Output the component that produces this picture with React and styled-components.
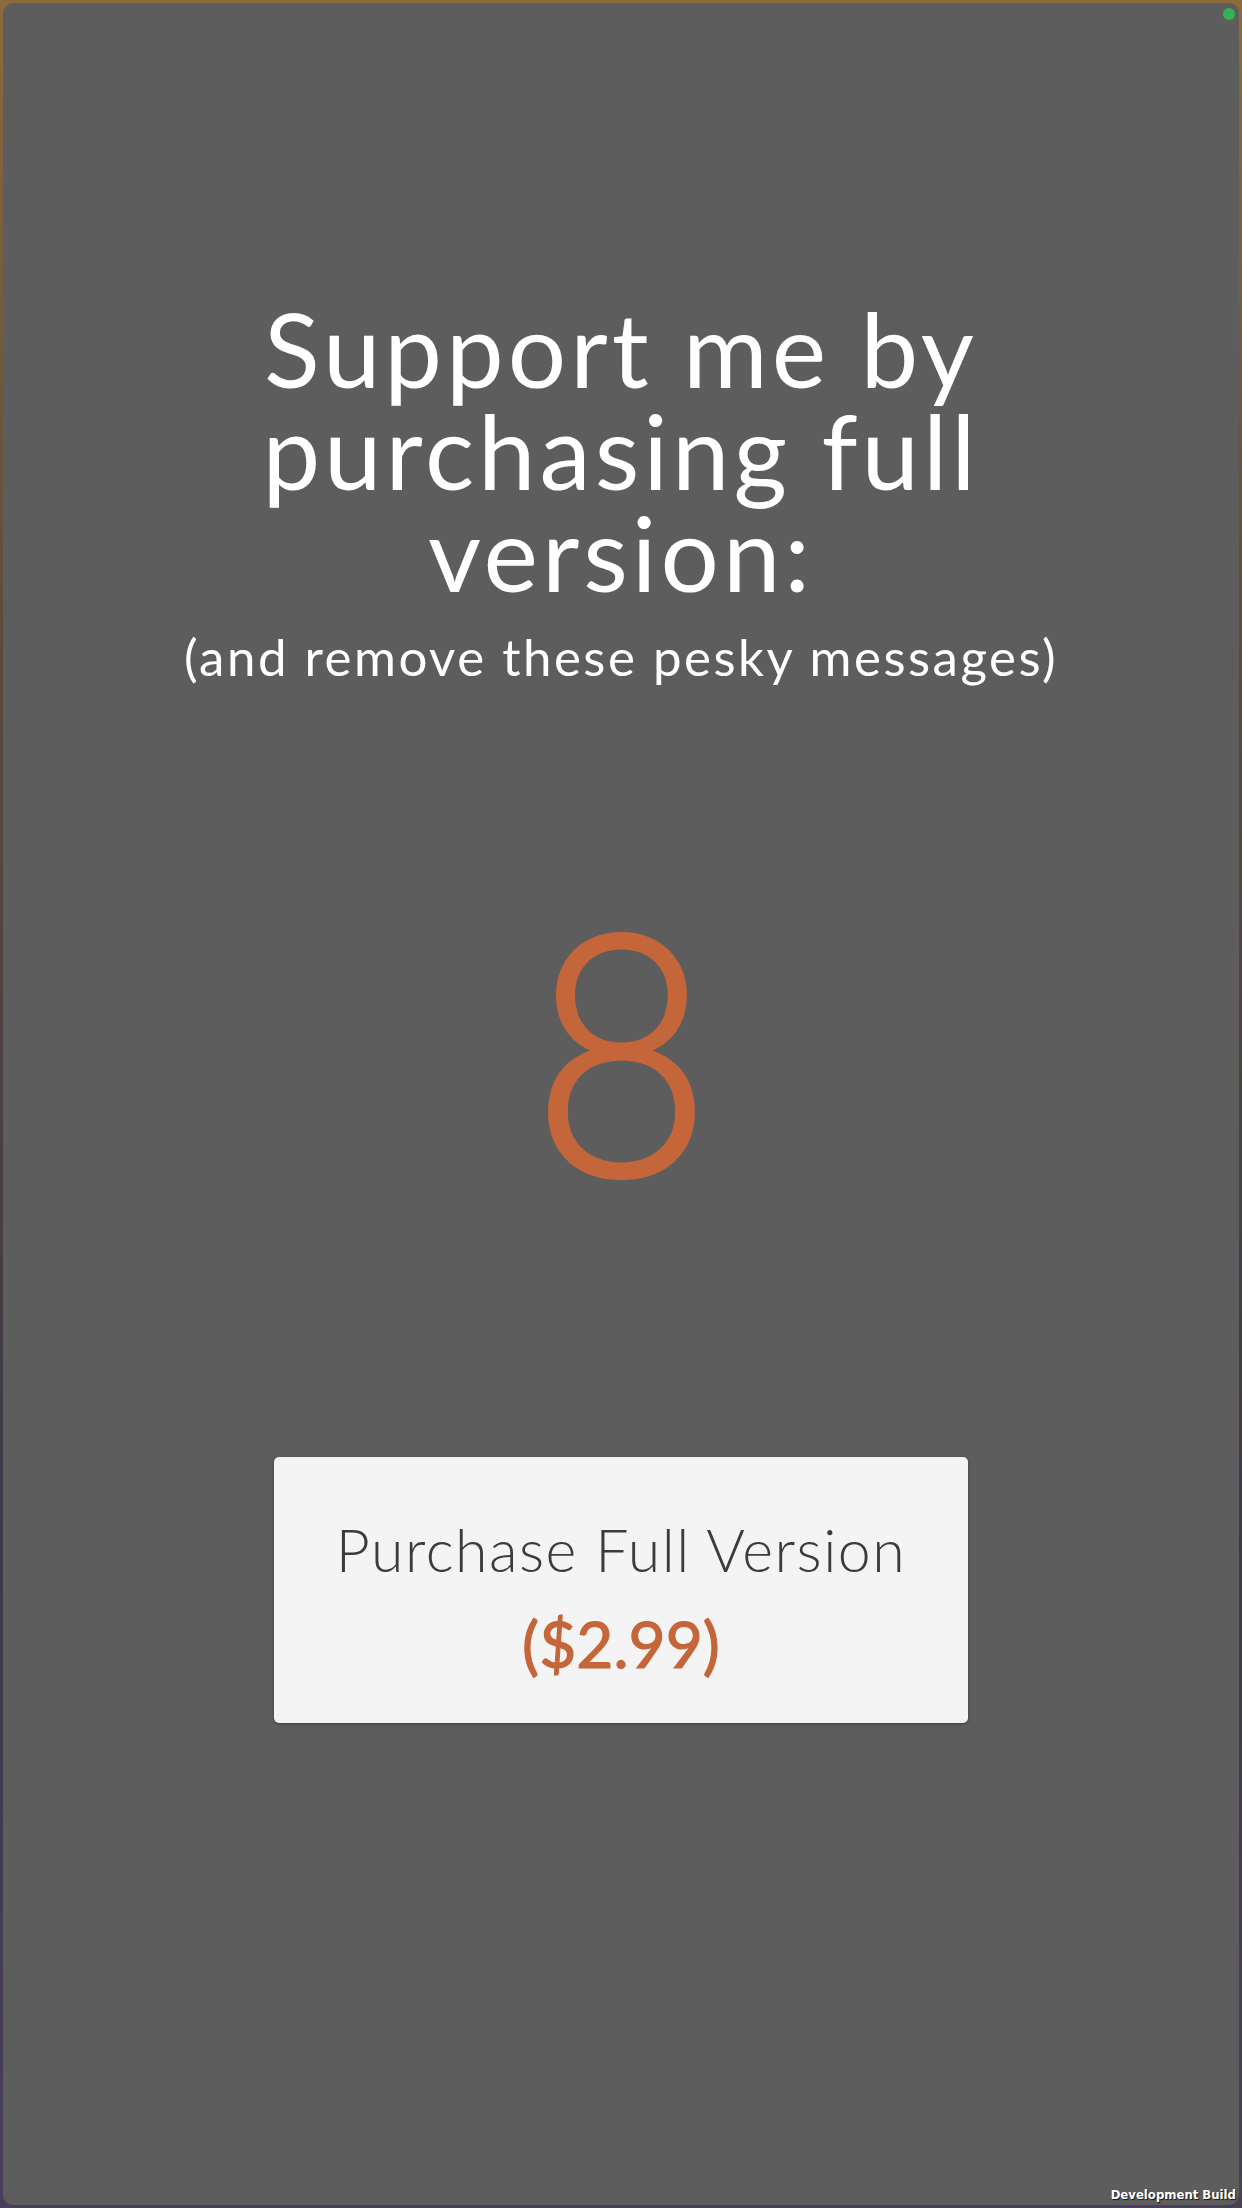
import React from 'react'
import styled, { createGlobalStyle } from 'styled-components'

const GlobalStyle = createGlobalStyle`
  html, body {
    margin: 0;
    padding: 0;
    width: 1242px;
    height: 2208px;
    overflow: hidden;
  }
  body {
    font-family: "Lato", "Open Sans", sans-serif;
  }
`;

const Backdrop = styled.div`
  width: 1242px;
  height: 2208px;
  box-sizing: border-box;
  padding: 3px;
  background: linear-gradient(180deg, #8c6b3c 0%, #5a4a3c 30%, #3c3848 70%, #4a3f5a 100%);
  position: relative;
`;

const Panel = styled.div`
  height: 100%;
  box-sizing: border-box;
  background: #5d5d5d;
  border-radius: 10px;
  display: flex;
  flex-direction: column;
  align-items: center;
  padding-top: 294px;
  position: relative;
`;

const Title = styled.h1`
  margin: 0;
  font-weight: 400;
  font-size: 103px;
  line-height: 102px;
  color: #ffffff;
  text-align: center;
  width: 900px;
  letter-spacing: 4px;
`;

const Subtitle = styled.p`
  margin: 24px 0 0;
  font-size: 51px;
  line-height: 60px;
  color: #ffffff;
  letter-spacing: 2.5px;
`;

const Countdown = styled.div`
  margin-top: 188px;
  font-size: 336px;
  line-height: 340px;
  font-weight: 300;
  color: #c4663a;
  -webkit-text-stroke: 5px #c4663a;
  transform: scaleX(0.92);
`;

const PurchaseButton = styled.button`
  margin-top: 242px;
  width: 694px;
  height: 266px;
  border: none;
  border-radius: 5px;
  background: #f4f4f4;
  box-shadow: 0 1px 3px rgba(0, 0, 0, 0.35);
  display: flex;
  flex-direction: column;
  align-items: center;
  justify-content: center;
  gap: 26px;
  padding-top: 14px;
  font-family: inherit;
  cursor: pointer;
`;

const ButtonLabel = styled.span`
  font-size: ${p => p.accent ? '64px' : '59px'};
  line-height: 68px;
  color: ${p => p.accent ? '#c4663a' : '#3b3b3b'};
  font-weight: ${p => p.accent ? 400 : 300};
  letter-spacing: ${p => p.accent ? '0px' : '1.5px'};
  -webkit-text-stroke: ${p => p.accent ? '1.2px #c4663a' : '0'};
`;

const StatusDot = styled.span`
  position: absolute;
  top: 5px;
  right: 4px;
  width: 12px;
  height: 12px;
  border-radius: 50%;
  background: #32b455;
`;

const BuildTag = styled.span`
  position: absolute;
  right: 6px;
  bottom: 6px;
  font-family: "DejaVu Sans Condensed", "DejaVu Sans", sans-serif;
  font-weight: 700;
  font-size: 13px;
  color: #ffffff;
  text-shadow: 1px 1px 1px rgba(0, 0, 0, 0.8);
`;

export default function App() {
  return (
    <Backdrop>
      <GlobalStyle />
      <Panel>
        <StatusDot />
        <Title>Support me by purchasing full version:</Title>
        <Subtitle>(and remove these pesky messages)</Subtitle>
        <Countdown>8</Countdown>
        <PurchaseButton>
          <ButtonLabel>Purchase Full Version</ButtonLabel>
          <ButtonLabel accent>($2.99)</ButtonLabel>
        </PurchaseButton>
      </Panel>
      <BuildTag>Development Build</BuildTag>
    </Backdrop>
  )
}
